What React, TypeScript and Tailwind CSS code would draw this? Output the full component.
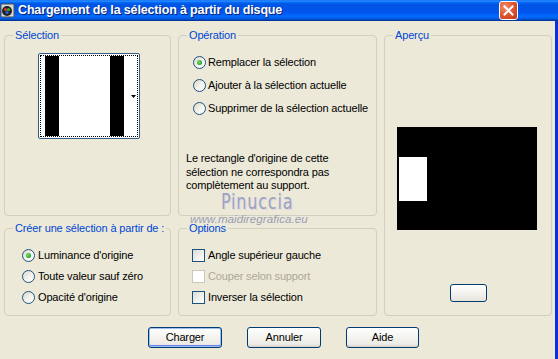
import React from "react";

const Radio = ({ checked }: { checked?: boolean }) => (
  <span className="w-[13px] h-[13px] rounded-full border border-[#1C5180] bg-[linear-gradient(135deg,#DCD9C8_0%,#F4F3EE_55%,#FFFFFF_100%)] flex items-center justify-center shrink-0">
    {checked && <span className="w-[5px] h-[5px] rounded-full bg-[radial-gradient(circle_at_40%_40%,#7BE27B_0%,#21A121_70%,#1A8A1A_100%)]" />}
  </span>
);

const Check = ({ disabled }: { disabled?: boolean }) => (
  <span
    className={
      disabled
        ? "w-[13px] h-[13px] border border-[#CAC8BB] bg-white shrink-0"
        : "w-[13px] h-[13px] border border-[#1C5180] bg-[linear-gradient(135deg,#DCDCD7_0%,#F2F2EE_60%,#FFFFFF_100%)] shrink-0"
    }
  />
);

const Group = ({ label, className, children }: { label: string; className?: string; children?: React.ReactNode }) => (
  <div className={"relative border border-[#D0D0BF] rounded-[4px] " + (className || "")}>
    <span className="absolute -top-[8px] left-[8px] px-[2px] bg-[#ECE9D8] text-[#0046D5] leading-[14px] whitespace-nowrap">{label}</span>
    {children}
  </div>
);

const Btn = ({ label, def, w }: { label: string; def?: boolean; w: string }) => (
  <button
    className={
      "h-[21px] " +
      w +
      " rounded-[3px] border border-[#003C74] bg-[linear-gradient(to_bottom,#FFFFFF_0%,#F4F3EE_50%,#ECEBE6_85%,#D6D0C5_100%)] text-black leading-none " +
      (def ? "shadow-[inset_0_0_0_1px_#9DBCF0,inset_0_-1px_0_1px_#6982EE]" : "")
    }
  >
    {label}
  </button>
);

export default function App() {
  return (
    <div
      className="relative w-[558px] h-[359px] bg-[#ECE9D8] flex flex-col overflow-hidden text-[11px] tracking-[-0.15px] text-black"
      style={{ fontFamily: '"Liberation Sans", Arial, sans-serif' }}
    >
      {/* Title bar */}
      <div className="h-[21px] flex items-center bg-[linear-gradient(to_bottom,#0058EE_0%,#3593FF_4%,#288EFF_6%,#127DFF_8%,#036FFC_10%,#0262EE_14%,#0057E5_20%,#0054E3_24%,#0055EB_56%,#005BF5_66%,#026AFE_76%,#0062EF_86%,#0052D6_92%,#0040AB_94%,#003092_100%)]">
        <svg width="15" height="15" viewBox="0 0 15 15" className="shrink-0">
          <rect x="1" y="1" width="13" height="13" rx="1" fill="#D8D8D8" stroke="#505050" />
          <circle cx="7" cy="8" r="5" fill="#202020" />
          <circle cx="5.5" cy="6.5" r="1.6" fill="#E03030" />
          <circle cx="8.5" cy="6.5" r="1.6" fill="#30B030" />
          <circle cx="7" cy="9.5" r="1.6" fill="#3060E0" />
        </svg>
        <span className="ml-[3px] text-white font-bold text-[12.5px] tracking-[-0.15px] [text-shadow:1px_1px_0_#0A1F6E]">
          Chargement de la sélection à partir du disque
        </span>
        <div className="flex-1" />
        <div className="w-[19px] h-[19px] mr-[40px] rounded-[3px] border border-white bg-[radial-gradient(circle_at_30%_30%,#F09070_0%,#E05A30_45%,#C0381A_100%)] flex items-center justify-center">
          <svg width="11" height="11" viewBox="0 0 11 11">
            <path d="M1.5 1.5 L9.5 9.5 M9.5 1.5 L1.5 9.5" stroke="white" strokeWidth="2" strokeLinecap="square" />
          </svg>
        </div>
      </div>

      {/* Body */}
      <div className="flex-1 flex">
        <div className="flex-1 flex flex-col">
          <div className="grid grid-cols-[167px_199px_168px] grid-rows-[181px_88px] gap-x-[7px] gap-y-[12px] ml-[4px] mt-[14px]">
            <Group label="Sélection" className="col-start-1 row-start-1">
              <div className="flex justify-center pt-[17px] pl-[3px]">
                <div className="w-[102px] h-[86px] border border-[#335C86] rounded-[2px] p-[1px] bg-white">
                  <div className="w-full h-full border border-dotted border-black flex">
                    <div className="w-[4px] bg-white" />
                    <div className="w-[14px] bg-black" />
                    <div className="w-[51px] bg-white" />
                    <div className="w-[14px] bg-black" />
                    <div className="flex-1 bg-white flex items-center justify-end pr-[1px]">
                      <svg width="5" height="3" viewBox="0 0 5 3">
                        <path d="M0 0 H5 L2.5 3 Z" fill="black" />
                      </svg>
                    </div>
                  </div>
                </div>
              </div>
            </Group>

            <Group label="Opération" className="col-start-2 row-start-1">
              <div className="flex flex-col gap-[10px] pl-[14px] pt-[20px]">
                <label className="flex items-center gap-[2px] h-[13px]"><Radio checked />Remplacer la sélection</label>
                <label className="flex items-center gap-[2px] h-[13px]"><Radio />Ajouter à la sélection actuelle</label>
                <label className="flex items-center gap-[2px] h-[13px]"><Radio />Supprimer de la sélection actuelle</label>
              </div>
              <p className="pl-[7px] mt-[37px] leading-[13.5px]">
                Le rectangle d'origine de cette
                <br />
                sélection ne correspondra pas
                <br />
                complètement au support.
              </p>
            </Group>

            <Group label="Aperçu" className="col-start-3 row-start-1 row-span-2 flex flex-col items-center">
              <div className="mt-[91px] w-[140px] h-[103px] bg-black pl-[2px] pt-[30px] ml-[-2px]">
                <div className="w-[28px] h-[44px] bg-white" />
              </div>
              <div className="mt-[54px] w-[37px] h-[18px] rounded-[3px] border border-[#003C74] bg-[linear-gradient(to_bottom,#FFFFFF_0%,#F4F3EE_50%,#E6E4DC_100%)]" />
            </Group>

            <Group label="Créer une sélection à partir de :" className="col-start-1 row-start-2">
              <div className="flex flex-col gap-[8px] pl-[17px] pt-[20px]">
                <label className="flex items-center gap-[3px] h-[13px]"><Radio checked />Luminance d'origine</label>
                <label className="flex items-center gap-[3px] h-[13px]"><Radio />Toute valeur sauf zéro</label>
                <label className="flex items-center gap-[3px] h-[13px]"><Radio />Opacité d'origine</label>
              </div>
            </Group>

            <Group label="Options" className="col-start-2 row-start-2">
              <div className="flex flex-col gap-[8px] pl-[13px] pt-[20px]">
                <label className="flex items-center gap-[3px] h-[13px]"><Check />Angle supérieur gauche</label>
                <label className="flex items-center gap-[3px] h-[13px] text-[#ACA899]"><Check disabled />Couper selon support</label>
                <label className="flex items-center gap-[3px] h-[13px]"><Check />Inverser la sélection</label>
              </div>
            </Group>
          </div>

          <div className="flex mt-[11px] pl-[148px] gap-[25px]">
            <Btn label="Charger" def w="w-[74px]" />
            <Btn label="Annuler" w="w-[74px]" />
            <Btn label="Aide" w="w-[73px]" />
          </div>
        </div>
        <div className="w-[3px] bg-[#0831D9]" />
      </div>

      {/* Watermark */}
      <div
        className="absolute left-[221px] top-[192px] text-[#9FA2C0] text-[16px] tracking-[0.8px] leading-none scale-y-[1.3] origin-top [text-shadow:1px_1px_0_#D8D8E4]"
        style={{ fontFamily: '"DejaVu Sans", sans-serif' }}
      >
        Pinuccia
      </div>
      <div
        className="absolute left-[190px] top-[214px] text-[#9A9CB4] text-[11.5px] tracking-[0.1px] leading-none italic"
        style={{ fontFamily: '"Liberation Sans", Arial, sans-serif' }}
      >
        www.maidiregrafica.eu
      </div>
    </div>
  );
}
